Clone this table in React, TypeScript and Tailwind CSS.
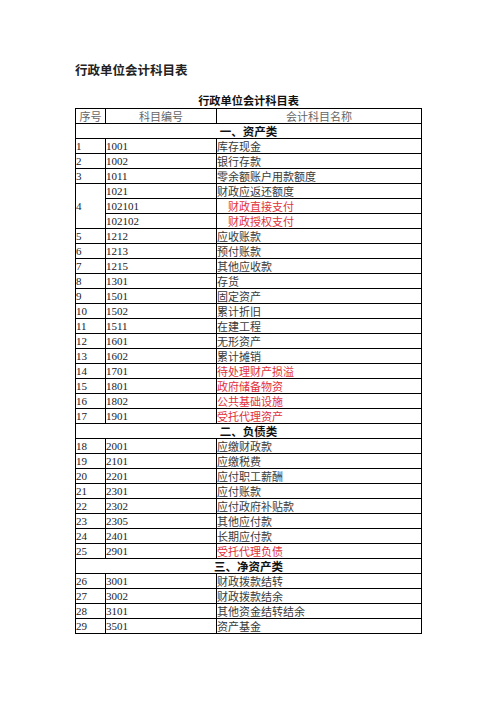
import React from "react";

type Row = { n: string; code: string; name: string; red?: boolean; indent?: boolean };

const sec1: Row[] = [
  { n: "1", code: "1001", name: "库存现金" },
  { n: "2", code: "1002", name: "银行存款" },
  { n: "3", code: "1011", name: "零余额账户用款额度" },
];
const sec1b: Row[] = [
  { n: "5", code: "1212", name: "应收账款" },
  { n: "6", code: "1213", name: "预付账款" },
  { n: "7", code: "1215", name: "其他应收款" },
  { n: "8", code: "1301", name: "存货" },
  { n: "9", code: "1501", name: "固定资产" },
  { n: "10", code: "1502", name: "累计折旧" },
  { n: "11", code: "1511", name: "在建工程" },
  { n: "12", code: "1601", name: "无形资产" },
  { n: "13", code: "1602", name: "累计摊销" },
  { n: "14", code: "1701", name: "待处理财产损溢", red: true },
  { n: "15", code: "1801", name: "政府储备物资", red: true },
  { n: "16", code: "1802", name: "公共基础设施", red: true },
  { n: "17", code: "1901", name: "受托代理资产", red: true },
];
const sec2: Row[] = [
  { n: "18", code: "2001", name: "应缴财政款" },
  { n: "19", code: "2101", name: "应缴税费" },
  { n: "20", code: "2201", name: "应付职工薪酬" },
  { n: "21", code: "2301", name: "应付账款" },
  { n: "22", code: "2302", name: "应付政府补贴款" },
  { n: "23", code: "2305", name: "其他应付款" },
  { n: "24", code: "2401", name: "长期应付款" },
  { n: "25", code: "2901", name: "受托代理负债", red: true },
];
const sec3: Row[] = [
  { n: "26", code: "3001", name: "财政拨款结转" },
  { n: "27", code: "3002", name: "财政拨款结余" },
  { n: "28", code: "3101", name: "其他资金结转结余" },
  { n: "29", code: "3501", name: "资产基金" },
];

function NumCell({ v }: { v: string }) {
  return (
    <div className="flex h-[15px] items-center overflow-hidden whitespace-nowrap border-r border-b border-black font-['Liberation_Serif','Noto_Sans_CJK_SC',serif] text-[11px] leading-[14px] text-[#222]">
      {v}
    </div>
  );
}

function NameCell({ r }: { r: { name: string; red?: boolean; indent?: boolean } }) {
  return (
    <div
      className={`flex h-[15px] items-center overflow-hidden whitespace-nowrap border-r border-b border-black font-['Noto_Sans_CJK_SC','Noto_Sans',sans-serif] text-[11px] leading-[14px] ${r.red ? "text-[#e2323c]" : "text-[#3a3a3a]"} ${r.indent ? "pl-[11px]" : ""}`}
    >
      {r.name}
    </div>
  );
}

function HeadCell({ label }: { label: string }) {
  return (
    <div className="flex h-[15px] items-center justify-center overflow-hidden whitespace-nowrap border-r border-b border-black font-['Noto_Sans_CJK_SC','Noto_Sans',sans-serif] text-[11px] leading-[14px] text-[#666]">
      {label}
    </div>
  );
}

function Rows({ rows }: { rows: Row[] }) {
  return (
    <>
      {rows.map((r) => (
        <React.Fragment key={r.code}>
          <NumCell v={r.n} />
          <NumCell v={r.code} />
          <NameCell r={r} />
        </React.Fragment>
      ))}
    </>
  );
}

function Section({ title }: { title: string }) {
  return (
    <div className="col-span-3 flex h-[15px] items-center justify-center overflow-hidden whitespace-nowrap border-r border-b border-black font-['Noto_Sans_CJK_SC','Noto_Sans',sans-serif] text-[11.5px] font-bold leading-[14px] text-[#111]">
      {title}
    </div>
  );
}

export default function App() {
  return (
    <div className="min-h-[702px] w-[496px] bg-white pl-[75px] pt-[61px]">
      <div className="font-['Noto_Sans_CJK_SC','Noto_Sans',sans-serif] text-[12.5px] font-bold leading-[18px] text-[#222]">
        行政单位会计科目表
      </div>
      <div className="w-[347px]">
        <div className="mt-[13px] h-[16px] text-center font-['Noto_Sans_CJK_SC','Noto_Sans',sans-serif] text-[11.2px] font-bold leading-[16px] text-[#111]">
          行政单位会计科目表
        </div>
        <div className="grid w-[347px] grid-cols-[30px_111px_205px] border-l border-t border-black">
          <HeadCell label="序号" />
          <HeadCell label="科目编号" />
          <HeadCell label="会计科目名称" />
          <Section title="一、资产类" />
          <Rows rows={sec1} />
          <div className="row-span-3 flex items-center border-r border-b border-black font-['Liberation_Serif',serif] text-[11px] leading-[14px] text-[#222]">
            4
          </div>
          <NumCell v="1021" />
          <NameCell r={{ name: "财政应返还额度" }} />
          <NumCell v="102101" />
          <NameCell r={{ name: "财政直接支付", red: true, indent: true }} />
          <NumCell v="102102" />
          <NameCell r={{ name: "财政授权支付", red: true, indent: true }} />
          <Rows rows={sec1b} />
          <Section title="二、负债类" />
          <Rows rows={sec2} />
          <Section title="三、净资产类" />
          <Rows rows={sec3} />
        </div>
      </div>
    </div>
  );
}
